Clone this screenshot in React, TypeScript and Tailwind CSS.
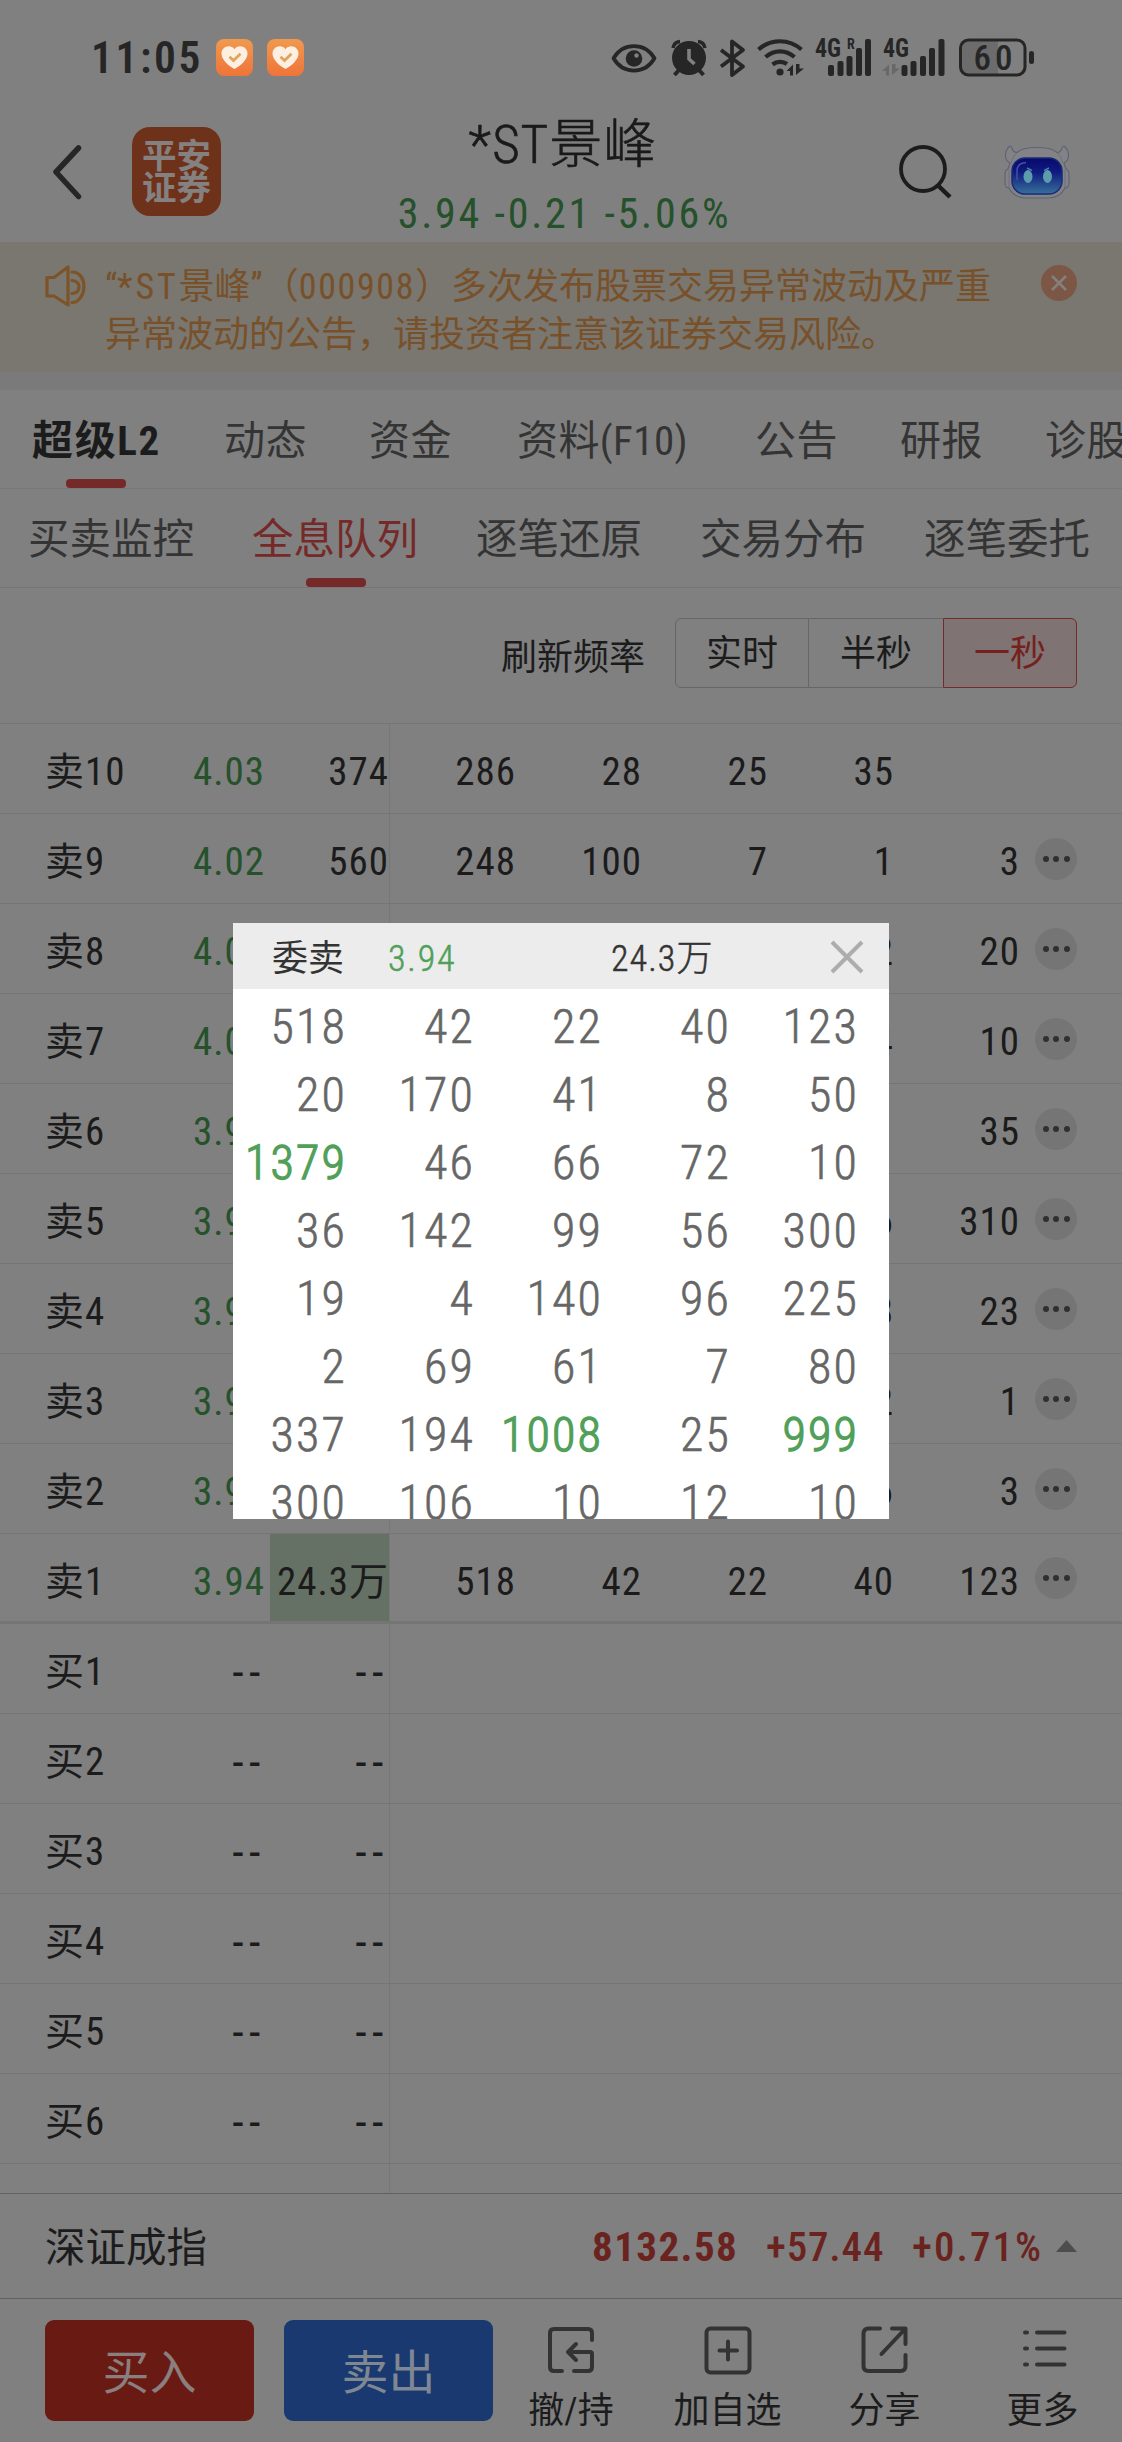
import clsx from "clsx";

const mainTabs = [
  { label: "超级L2", width: "w-[192px]", active: true },
  { label: "动态", width: "w-[145px]" },
  { label: "资金", width: "w-[148px]" },
  { label: "资料(F10)", width: "w-[238px]" },
  { label: "公告", width: "w-[145px]" },
  { label: "研报", width: "w-[145px]" },
  { label: "诊股", width: "w-[145px]" },
];

const subTabs = ["买卖监控", "全息队列", "逐笔还原", "交易分布", "逐笔委托"];

const sellRows = [
  { name: "卖10", price: "4.03", volume: "374", queue: ["286", "28", "25", "35", ""] },
  { name: "卖9", price: "4.02", volume: "560", queue: ["248", "100", "7", "1", "3"] },
  { name: "卖8", price: "4.01", volume: "", queue: ["", "", "", "2", "20"] },
  { name: "卖7", price: "4.00", volume: "", queue: ["", "", "", "4", "10"] },
  { name: "卖6", price: "3.99", volume: "", queue: ["", "", "", "", "35"] },
  { name: "卖5", price: "3.98", volume: "", queue: ["", "", "", "6", "310"] },
  { name: "卖4", price: "3.97", volume: "", queue: ["", "", "", "8", "23"] },
  { name: "卖3", price: "3.96", volume: "", queue: ["", "", "", "2", "1"] },
  { name: "卖2", price: "3.95", volume: "", queue: ["", "", "", "6", "3"] },
  { name: "卖1", price: "3.94", volume: "24.3万", queue: ["518", "42", "22", "40", "123"] },
];

const buyRows = ["买1", "买2", "买3", "买4", "买5", "买6"];

const orders = [
  [518, 42, 22, 40, 123],
  [20, 170, 41, 8, 50],
  [1379, 46, 66, 72, 10],
  [36, 142, 99, 56, 300],
  [19, 4, 140, 96, 225],
  [2, 69, 61, 7, 80],
  [337, 194, 1008, 25, 999],
  [300, 106, 10, 12, 10],
];

const HeartBadge = ({ id }: { id: string }) => (
  <svg width="37" height="37" viewBox="0 0 37 37">
    <defs>
      <linearGradient id={id} x1="0" y1="0" x2="0" y2="1">
        <stop offset="0" stopColor="#f09a4e" />
        <stop offset="1" stopColor="#ee7438" />
      </linearGradient>
    </defs>
    <rect width="37" height="37" rx="8" fill={`url(#${id})`} />
    <path d="M18.500 30C12 26.500 5.500 20.500 5.500 14.500C5.500 7.500 14.500 4.800 18.500 10.200C22.500 4.800 31.500 7.500 31.500 14.500C31.500 20.500 25 26.500 18.500 30Z" fill="#fdf0e2" />
    <path d="M13.500 17.800L17.500 21.600L24.500 14.800" fill="none" stroke="#e0a45c" strokeWidth="2.800" />
  </svg>
);

const StatusIcons = () => (
  <svg width="450" height="65" viewBox="0 0 450 65" fill="#262626" stroke="none">
    {/* Eye */}
    <path d="M13.500 33.300C23 17 45 17 54.500 33.300C45 49.600 23 49.600 13.500 33.300Z" fill="none" stroke="#262626" strokeWidth="3.800" strokeLinejoin="round" />
    <circle cx="34" cy="33.500" r="8.300" />
    <circle cx="36.500" cy="30.500" r="2.200" fill="#808080" />
    {/* Alarm */}
    <circle cx="89" cy="33" r="17" />
    <path d="M73 23Q74 17 80 16.500M105 23Q104 17 98 16.500" fill="none" stroke="#262626" strokeWidth="3.500" />
    <path d="M79 45L74.500 50M99 45L103.500 50" stroke="#262626" strokeWidth="4" />
    <path d="M89 24V34L94.500 39" fill="none" stroke="#808080" strokeWidth="3.600" />
    {/* Bluetooth */}
    <path d="M121 25L143 41.500L132 50V16.500L143 25L121 41.500" fill="none" stroke="#262626" strokeWidth="3.800" strokeLinejoin="round" />
    {/* Wifi */}
    <path d="M158.500 24.500C171 13.500 189 13.500 201.500 24.500M165.500 32C174.500 24.500 185.500 24.500 194.500 32M172.500 39.500C177 36 183 36 187 39" fill="none" stroke="#262626" strokeWidth="4.200" />
    <circle cx="180" cy="47" r="3.600" />
    <path d="M193 39.500V50.500H190V46H186.500ZM196 39V50L204 43.500H199.500V39Z" />
    {/* Signal, first sim */}
    <text x="215" y="32" fontSize="25" fontWeight="700" textLength="26" lengthAdjust="spacingAndGlyphs">4G</text>
    <text x="247" y="24" fontSize="14" fontWeight="700" textLength="7">R</text>
    <rect x="228" y="40" width="6" height="11" rx="2" />
    <rect x="237.500" y="36" width="6" height="15" rx="2" />
    <rect x="246.500" y="31" width="6" height="20" rx="2" />
    <rect x="256" y="23" width="6" height="28" rx="2" />
    <rect x="265" y="14" width="6" height="37" rx="2" />
    {/* Signal, second sim */}
    <text x="283" y="32" fontSize="25" fontWeight="700" textLength="26" lengthAdjust="spacingAndGlyphs">4G</text>
    <path d="M289 39.500V50.500H286V46H282ZM292 39V50L300 43.500H295.500V39Z" fill="#686868" />
    <rect x="301.500" y="40" width="6" height="11" rx="2" />
    <rect x="310.500" y="36" width="6" height="15" rx="2" />
    <rect x="320" y="31" width="6" height="20" rx="2" />
    <rect x="329" y="23" width="6" height="28" rx="2" />
    <rect x="338.500" y="14" width="6" height="37" rx="2" />
    {/* Battery */}
    <path d="M369 16H398V49H369Q362 49 362 42V23Q362 16 369 16Z" fill="#6c6c6c" />
    <rect x="360.500" y="15" width="64.500" height="35" rx="8" fill="none" stroke="#262626" strokeWidth="3" />
    <rect x="429" y="26" width="5" height="13" rx="2.500" />
    <text x="373.500" y="44.500" fontSize="35" fontWeight="500" textLength="39">60</text>
  </svg>
);

const Robot = () => (
  <svg width="66" height="54" viewBox="0 0 66 54">
    <defs>
      <linearGradient id="visor" x1="0" y1="0" x2="0" y2="1">
        <stop offset="0" stopColor="#08086c" />
        <stop offset="0.400" stopColor="#101c80" />
        <stop offset="1" stopColor="#38709a" />
      </linearGradient>
    </defs>
    <path d="M6 1C9 1 7 8 13 7.500Q18 2.500 33 2.500T53 7.500C59 8 57 1 60 1C65 5 67 14 60 18Q61 22 62 24Q65 25 65 30V38Q65 43 61 43Q56 53 44 53H22Q10 53 5 43Q1 43 1 38V30Q1 25 4 24Q5 22 6 18C-1 14 1 5 6 1Z" fill="#838387" stroke="#5e6474" strokeWidth="1.200" />
    <path d="M5 25V43M61 25V43M13 7.500Q9 11 7 18M53 7.500Q57 11 59 18" fill="none" stroke="#6c6e7a" strokeWidth="1" />
    <rect x="8" y="13" width="50" height="36" rx="13" fill="url(#visor)" stroke="#182c78" strokeWidth="1.500" />
    <path d="M13 35V26Q13 18 22 17.500" fill="none" stroke="#4650a0" strokeWidth="1.500" />
    <ellipse cx="24" cy="31.500" rx="4.500" ry="6.500" fill="#5c9cac" />
    <ellipse cx="43.500" cy="31.500" rx="4.500" ry="6.500" fill="#5c9cac" />
    <path d="M23 23L28 25.500M45 23L40 25.500" stroke="#4c78a8" strokeWidth="1.500" />
  </svg>
);

const MoreDots = () => (
  <div className="flex h-[42px] w-[42px] items-center justify-center gap-[4.5px] rounded-full bg-[#757575]">
    <span className="h-1.5 w-1.5 rounded-full bg-[#303030]" />
    <span className="h-1.5 w-1.5 rounded-full bg-[#303030]" />
    <span className="h-1.5 w-1.5 rounded-full bg-[#303030]" />
  </div>
);

const Header = () => (
  <header>
    <div className="flex h-[115px] items-start pl-[91px] pt-[25px]">
      <div className="flex h-[65px] w-[509px] items-center">
        <span className="w-[125px] pt-[2px] text-[43.5px] font-semibold tracking-[0.06em] text-[#262626]">11:05</span>
        <div className="flex gap-[14px] pb-px">
          <HeartBadge id="badge-a" />
          <HeartBadge id="badge-b" />
        </div>
      </div>
      <StatusIcons />
    </div>

    <div className="flex h-[127px] items-start">
      <svg className="ml-[50px] mt-[29px]" width="34" height="56" viewBox="0 0 34 56" fill="none" stroke="#262626" strokeWidth="5.500" strokeLinecap="round" strokeLinejoin="round">
        <path d="M28.500 4L6 28L28.500 52.500" />
      </svg>
      <div className="ml-[48px] mt-3 flex h-[89px] w-[89px] flex-col items-center justify-center rounded-[18px] bg-[#6e321b] text-[34.5px] font-bold leading-[32px] text-[#858180]">
        <span>平安</span>
        <span>证券</span>
      </div>
      <div className="ml-[137px] flex w-[410px] flex-col items-center">
        <h1 className="text-[53px] font-light leading-[60px] tracking-[0.02em] text-[#1a1a1a] [-webkit-text-stroke:0.6px]">*ST景峰</h1>
        <div className="mt-[9px] pl-[3px] text-[42px] leading-[60px] tracking-[0.066em] text-[#25512b]">3.94 -0.21 -5.06%</div>
      </div>
      <svg className="ml-[130px] mt-[29px]" width="56" height="56" viewBox="0 0 56 56" fill="none" stroke="#1c1c1c" strokeWidth="3.800">
        <circle cx="25" cy="25" r="22" />
        <path d="M39.500 41L52 53" strokeWidth="4.500" />
      </svg>
      <div className="ml-[50px] mt-[30px]">
        <Robot />
      </div>
    </div>
  </header>
);

const Notice = () => (
  <div className="flex h-[148px] items-start border-b-[18px] border-[#7a7a7a] bg-[#797770] pt-5">
    <svg className="ml-[43px] mt-[2px] shrink-0" width="44" height="44" viewBox="0 0 44 44" fill="none" stroke="#7c5427" strokeWidth="3.200" strokeLinejoin="round" strokeLinecap="round">
      <path d="M4 13.500H11L25 3V41L11 32H4Z" />
      <path d="M29 8C37 8 41 15 41 22.500S36 38.500 29 38.500M29 16.500C34 17 36 20 36 23S34 29 29 29.500" />
    </svg>
    <p className="ml-[18px] mt-px w-[910px] whitespace-nowrap text-[36px] leading-[48px] text-[#78512a] [text-spacing-trim:space-all]">
      “<span className="tracking-[0.08em]">*ST</span>景峰”（<span className="tracking-[0.045em]">000908</span>）多次发布股票交易异常波动及严重
      <br />
      异常波动的公告，请投资者注意该证券交易风险。
    </p>
    <svg className="ml-[26px] mt-[3px] shrink-0" width="36" height="36" viewBox="0 0 36 36">
      <circle cx="18" cy="18" r="18" fill="#7d5745" />
      <path d="M11 11L25 25M25 11L11 25" stroke="#858080" strokeWidth="2.500" />
    </svg>
  </div>
);

const Tabs = () => (
  <nav className="overflow-hidden">
    <div className="flex h-[99px] border-b border-[#787878] pl-[32px]">
      {mainTabs.map((tab) => (
        <div key={tab.label} className={clsx("flex h-full shrink-0 flex-col items-start whitespace-nowrap text-[41px]", tab.width, tab.active ? "font-bold tracking-[0.04em] text-[#1c1c1c]" : "tracking-[0.01em] text-[#343434]")}>
          <span className="mt-[21px] leading-[60px]">{tab.label}</span>
          {tab.active && <i className="ml-[34px] mt-[8px] h-[9px] w-[60px] rounded-[4px] bg-[#752a29]" />}
        </div>
      ))}
    </div>
    <div className="flex h-[99px] border-b border-[#767676] pl-[28px]">
      {subTabs.map((label, i) => (
        <div key={label} className={clsx("flex h-full w-[224px] shrink-0 flex-col items-start whitespace-nowrap text-[41.5px]", i === 1 ? "text-[#752a29]" : "text-[#343434]")}>
          <span className="mt-[21px] leading-[60px]">{label}</span>
          {i === 1 && <i className="ml-[54px] mt-[8px] h-[9px] w-[60px] rounded-[4px] bg-[#752a29]" />}
        </div>
      ))}
    </div>
  </nav>
);

const RefreshRate = () => (
  <div className="flex h-[136px] items-start justify-end border-b border-[#767676] pr-[45px] pt-[30px] text-[36px] text-[#1c1c1c]">
    <span className="mr-[30px] mt-[10px] leading-[60px]">刷新频率</span>
    <div className="flex h-[70px] leading-[70px]">
      <span className="w-[134px] rounded-l-[6px] border border-[#666] text-center">实时</span>
      <span className="w-[134px] border-y border-[#666] text-center">半秒</span>
      <span className="w-[134px] rounded-r-[6px] border border-[#752a29] bg-[#7f7374] text-center text-[#75211d]">一秒</span>
    </div>
  </div>
);

const OrderBook = () => (
  <div className="h-[1469px] overflow-hidden text-[39px] tracking-[0.025em] text-[#1b1b1b]">
    {sellRows.map((row, i) => (
      <div key={row.name} className={clsx("flex h-[90px] items-stretch border-[#757575] leading-[97px]", i === 9 ? "border-b-[3px]" : "border-b")}>
        <span className="w-[130px] pl-[45px]">{row.name}</span>
        <span className="w-[135px] text-right text-[#25512b]">{row.price}</span>
        <span className={clsx("ml-[5px] w-[119px] whitespace-nowrap text-right", i === 9 && "bg-[#667165]")}>{row.volume}</span>
        <div className="flex flex-1 items-stretch border-l border-[#777]">
          {row.queue.map((value, j) => (
            <span key={j} className="w-[126px] text-right">{value}</span>
          ))}
          {i > 0 && (
            <div className="ml-[15px] flex items-center">
              <MoreDots />
            </div>
          )}
        </div>
      </div>
    ))}
    {buyRows.map((name) => (
      <div key={name} className="flex h-[90px] items-stretch border-b border-[#757575] leading-[97px]">
        <span className="w-[130px] pl-[45px]">{name}</span>
        <span className="w-[136px] text-right text-[46px] tracking-[0.12em]">--</span>
        <span className="w-[123px] text-right text-[46px] tracking-[0.12em] -mr-px">--</span>
        <span className="ml-px border-l border-[#777]" />
      </div>
    ))}
    <div className="ml-[389px] h-[30px] border-l border-[#777]" />
  </div>
);

const IndexBar = () => (
  <div className="flex h-[106px] items-center border-y border-[#606060] px-[45px] text-[41px] tracking-[0.025em]">
    <span className="pt-[5px] text-[40.5px] tracking-normal text-[#1c1c1c]">深证成指</span>
    <div className="ml-auto flex pt-[4px] text-[#6b2320]">
      <span className="w-[174px] font-bold tracking-[0.035em]">8132.58</span>
      <span className="w-[146px] font-medium tracking-[0.02em]">+57.44</span>
      <span className="w-[144px] font-medium tracking-[0.05em]">+0.71%</span>
    </div>
    <svg width="21" height="12" viewBox="0 0 21 12">
      <path d="M10.500 0L21 12H0Z" fill="#4d4d4d" />
    </svg>
  </div>
);

const CancelIcon = () => (
  <>
    <path d="M45 14V7Q45 3 41 3H7Q3 3 3 7V41Q3 45 7 45H15" />
    <path d="M27 45H41Q45 45 45 41V28Q45 26 43 26H22M29 18L21 26L29 34" />
  </>
);

const AddIcon = () => (
  <>
    <rect x="2.500" y="2.500" width="43" height="44" rx="4" />
    <path d="M24 15.500V33.500M15.500 24.500H33" />
  </>
);

const ShareIcon = () => (
  <>
    <path d="M19 2.500H7.500Q2.500 2.500 2.500 8V40Q2.500 45 7.500 45H39.500Q44.500 45 44.500 40V29" />
    <path d="M31 2.500H44.500V18M44 3L20.500 28" />
  </>
);

const MoreIcon = () => (
  <path d="M6 6.500H8M18 6.500H45.500M6 22.500H8M18 22.500H45.500M6 38.500H8M18 38.500H45.500" />
);

const actions = [
  { label: "撤/持", width: "w-[156px]", icon: <CancelIcon /> },
  { label: "加自选", width: "w-[157px]", icon: <AddIcon /> },
  { label: "分享", width: "w-[157px]", icon: <ShareIcon /> },
  { label: "更多", width: "w-[159px]", icon: <MoreIcon /> },
];

const BottomBar = () => (
  <footer className="flex h-[144px] items-start">
    <button className="ml-[45px] mt-[21px] h-[101px] w-[209px] rounded-[9px] bg-[#691a13] pt-[5px] text-[47px] text-[#8a7f7e]">买入</button>
    <button className="ml-[30px] mt-[21px] h-[101px] w-[209px] rounded-[9px] bg-[#193970] pt-[5px] text-[47px] text-[#7f8793]">卖出</button>
    <div className="flex">
      {actions.map((action) => (
        <div key={action.label} className={clsx("flex shrink-0 flex-col items-center", action.width)}>
          <svg className="mt-[27px]" width="48" height="51" viewBox="0 0 48 51" fill="none" stroke="#333" strokeWidth="4" strokeLinecap="round" strokeLinejoin="round">
            {action.icon}
          </svg>
          <span className="mt-[10px] whitespace-nowrap text-[36px] leading-[48px] text-[#1c1c1c]">{action.label}</span>
        </div>
      ))}
    </div>
  </footer>
);

const OrderPopup = () => (
  <div className="absolute left-[233px] top-[923px] h-[596px] w-[656px] overflow-hidden bg-white">
    <div className="flex h-[66px] items-center bg-[#ececec] pl-[39px] pt-[5px] text-[36px] text-[#333]">
      <span className="w-[116px]">委卖</span>
      <span className="w-[223px] font-light tracking-[0.05em] text-[#50a05a] [-webkit-text-stroke:0.5px]">3.94</span>
      <span className="w-[218px] font-light tracking-[0.03em] [-webkit-text-stroke:0.5px]">24.3万</span>
      <svg className="mb-[4px]" width="36" height="36" viewBox="0 0 36 36" stroke="#adadad" strokeWidth="4">
        <path d="M3 3L33 33M33 3L3 33" />
      </svg>
    </div>
    <div className="pt-[2px] text-[48px] font-light leading-[72px] tracking-[0.045em] text-[#666]">
      {orders.map((row, i) => (
        <div key={i} className="flex h-[68px]">
          {row.map((value, j) => (
            <span
              key={j}
              className={clsx(
                "text-right",
                j === 0 ? "w-[114px]" : "w-[128px]",
                value > 900 ? "text-[#50a05a] [-webkit-text-stroke:1.3px]" : "[-webkit-text-stroke:0.6px]"
              )}
            >
              {value}
            </span>
          ))}
        </div>
      ))}
    </div>
  </div>
);

export default function App() {
  return (
    <div className="relative h-[2442px] w-[1122px] overflow-hidden bg-[#808080] font-['Roboto_Condensed','Noto_Sans_CJK_SC',sans-serif]">
      <Header />
      <Notice />
      <Tabs />
      <RefreshRate />
      <OrderBook />
      <IndexBar />
      <BottomBar />
      <OrderPopup />
    </div>
  );
}
